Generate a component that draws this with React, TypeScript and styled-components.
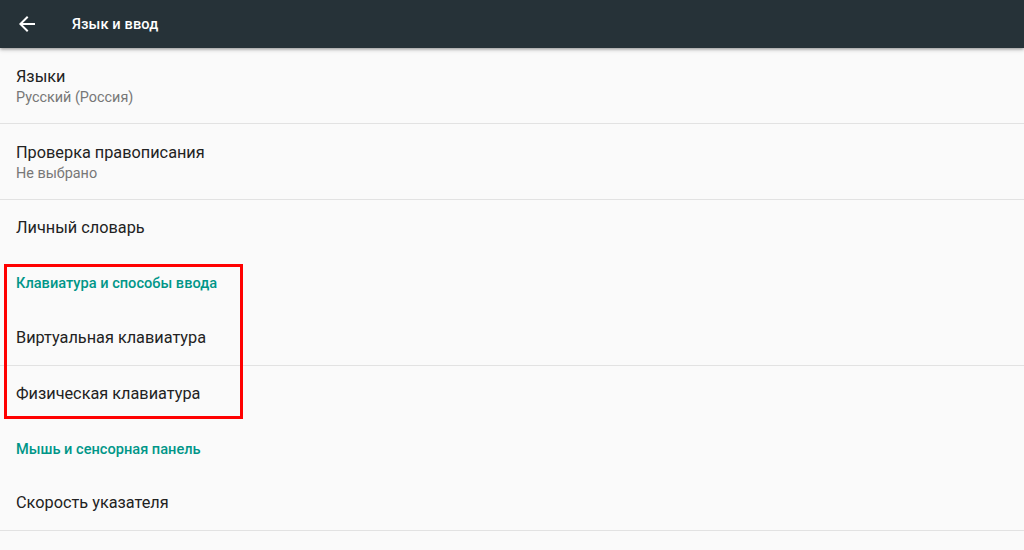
import React from "react";
import styled, { createGlobalStyle } from "styled-components";

const Global = createGlobalStyle`
  html, body { margin: 0; padding: 0; background: #fafafa; }
  body { font-family: Roboto, "Noto Sans", sans-serif; -webkit-font-smoothing: antialiased; }
`;

const Page = styled.div`
  position: relative;
  width: 1024px;
  height: 550px;
  overflow: hidden;
  background: #fafafa;
`;

const Toolbar = styled.header`
  position: relative;
  z-index: 1;
  height: 48px;
  background: #263238;
  display: flex;
  align-items: center;
  box-shadow: 0 1px 3px rgba(0, 0, 0, 0.35), 0 2px 5px rgba(0, 0, 0, 0.12);
`;

const BackButton = styled.div`
  width: 24px;
  height: 24px;
  margin-left: 15px;
  margin-top: -1px;
  display: flex;
  align-items: center;
  justify-content: center;
`;

const Title = styled.h1`
  margin: 0 0 0 33px;
  font-size: 14.6px;
  font-weight: 500;
  color: #ffffff;
  letter-spacing: 0.1px;
`;

const List = styled.div`
  display: flex;
  flex-direction: column;
`;

const Item = styled.div<{ $divider?: boolean; $twoLine?: boolean }>`
  height: ${(p) => (p.$twoLine ? 76 : 56)}px;
  padding: ${(p) => (p.$twoLine ? "19px 16px 0" : "1px 16px 0")};
  display: flex;
  flex-direction: column;
  justify-content: ${(p) => (p.$twoLine ? "flex-start" : "center")};
  box-sizing: border-box;
  border-bottom: 1px solid ${(p) => (p.$divider ? "#e2e2e2" : "transparent")};
`;

const ItemTitle = styled.div`
  font-size: 16.3px;
  line-height: 20px;
  color: #222222;
`;

const ItemSummary = styled.div`
  font-size: 14.4px;
  line-height: 20px;
  color: #777777;
  margin-top: 1px;
`;

const Category = styled.div<{ $h?: number }>`
  height: ${(p) => p.$h ?? 54}px;
  padding: 0 16px;
  display: flex;
  align-items: center;
  box-sizing: border-box;
  font-size: 14.6px;
  font-weight: 500;
  color: #009688;
`;

const Highlight = styled.div`
  position: absolute;
  left: 4px;
  top: 264px;
  width: 239px;
  height: 155px;
  box-sizing: border-box;
  border: 3px solid #ff0000;
  pointer-events: none;
`;

export default function App() {
  return (
    <Page>
      <Global />
      <Toolbar>
        <BackButton>
          <svg width="24" height="24" viewBox="0 0 24 24">
            <path
              fill="#ffffff"
              d="M20 11H7.83l5.59-5.59L12 4l-8 8 8 8 1.41-1.41L7.83 13H20v-2z"
            />
          </svg>
        </BackButton>
        <Title>Язык и ввод</Title>
      </Toolbar>
      <List>
        <Item $twoLine $divider>
          <ItemTitle>Языки</ItemTitle>
          <ItemSummary>Русский (Россия)</ItemSummary>
        </Item>
        <Item $twoLine $divider>
          <ItemTitle>Проверка правописания</ItemTitle>
          <ItemSummary>Не выбрано</ItemSummary>
        </Item>
        <Item>
          <ItemTitle>Личный словарь</ItemTitle>
        </Item>
        <Category>Клавиатура и способы ввода</Category>
        <Item $divider>
          <ItemTitle>Виртуальная клавиатура</ItemTitle>
        </Item>
        <Item>
          <ItemTitle>Физическая клавиатура</ItemTitle>
        </Item>
        <Category $h={53}>Мышь и сенсорная панель</Category>
        <Item $divider>
          <ItemTitle>Скорость указателя</ItemTitle>
        </Item>
      </List>
      <Highlight />
    </Page>
  );
}
